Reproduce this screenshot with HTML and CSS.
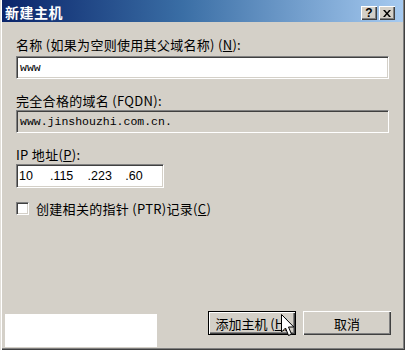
FILE: index.html
```html
<!DOCTYPE html>
<html>
<head>
<meta charset="utf-8">
<link rel="stylesheet" href="styles.css">
</head>
<body>
<div class="window">
  <div class="titlebar">
    <span class="title">新建主机</span>
    <div class="tbtns">
      <div class="tbtn help">?</div>
      <div class="tbtn close">
        <svg width="8" height="7" viewBox="0 0 8 7"><path d="M0 0h2l2 2.5L6 0h2L5 3.5 8 7H6L4 4.5 2 7H0l3-3.5z" fill="#000"/></svg>
      </div>
    </div>
  </div>
  <div class="content">
    <div class="label lbl1">名称 (如果为空则使用其父域名称) (<u>N</u>):</div>
    <div class="field">www</div>
    <div class="label lbl2">完全合格的域名 (FQDN):</div>
    <div class="field disabled">www.jinshouzhi.com.cn.</div>
    <div class="label lbl2">IP 地址(<u>P</u>):</div>
    <div class="field ip">
      <span class="oct o1">10</span><span class="oct">.115</span><span class="oct">.223</span><span class="oct">.60</span>
    </div>
    <div class="check-row">
      <div class="checkbox"></div>
      <span class="label">创建相关的指针 (PTR)记录(<u>C</u>)</span>
    </div>
  </div>
  <div class="footer">
    <div class="blank"></div>
    <div class="buttons">
      <div class="btn default"><span>添加主机 (<u>H</u>)</span></div>
      <div class="btn">取消</div>
    </div>
  </div>
  <svg class="cursor" width="14" height="23" viewBox="0 0 14 23">
    <path d="M0.5 0.5 L0.5 18 L4.5 14 L7.5 21.5 L10.5 20.2 L7.5 13 L12.8 13 Z" fill="#fff" stroke="#000" stroke-width="1" stroke-linejoin="miter"/>
  </svg>
</div>
</body>
</html>
```

FILE: styles.css
```css
html, body {
  margin: 0;
  padding: 0;
  background: #d4d0c8;
}
.window {
  position: relative;
  width: 405px;
  height: 350px;
  box-sizing: border-box;
  padding: 0 2px 2px 2px;
  background: #d4d0c8;
  box-shadow: inset 1px 0 #e2dfd9, inset 2px 0 #ffffff, inset -1px -1px #404040, inset -2px -2px #808080;
  display: flex;
  flex-direction: column;
  font-family: "Noto Sans CJK SC", "Liberation Sans", sans-serif;
  font-size: 13px;
  color: #000;
}
.titlebar {
  height: 22px;
  flex: none;
  display: flex;
  align-items: center;
  justify-content: space-between;
  padding: 0 8px 0 3px;
  background: linear-gradient(to right, #0a246a 0%, #3a6ea5 45%, #a6caf0 100%);
}
.title {
  color: #fff;
  font-weight: bold;
  font-size: 14px;
  line-height: 16px;
  letter-spacing: 0.5px;
  margin-top: 1px;
}
.tbtns {
  display: flex;
  gap: 2px;
  margin-top: 4px;
}
.tbtn {
  width: 16px;
  height: 14px;
  box-sizing: border-box;
  background: #d4d0c8;
  box-shadow: inset 1px 1px #fff, inset -1px -1px #404040, inset -2px -2px #808080;
  display: flex;
  align-items: center;
  justify-content: center;
  font-family: "Liberation Sans", sans-serif;
  font-weight: bold;
  font-size: 12px;
  line-height: 12px;
}
.content {
  padding: 0 14px;
  display: flex;
  flex-direction: column;
}
.label {
  line-height: 15px;
  height: 15px;
  white-space: nowrap;
  letter-spacing: 0.3px;
}
.lbl1 { margin-top: 15px; }
.lbl2 { margin-top: 14px; }
.field {
  margin-top: 3px;
  height: 23px;
  box-sizing: border-box;
  background: #fff;
  border: 1px solid;
  border-color: #808080 #fff #fff #808080;
  box-shadow: inset 1px 1px #404040, inset -1px -1px #d4d0c8;
  padding: 0 0 0 3px;
  display: flex;
  align-items: center;
  font-family: "Liberation Mono", monospace;
  font-size: 11.5px;
}
.lbl1 + .field { margin-top: 4px; }
.field.disabled {
  background: #d4d0c8;
  margin-top: 2px;
}
.field.ip {
  width: 148px;
  height: 24px;
  margin-top: 2px;
  font-family: "Liberation Sans", sans-serif;
  font-size: 12.5px;
  padding-left: 2px;
}
.oct { width: 39px; }
.oct.o1 { width: 32px; }
.check-row {
  margin-top: 13px;
  display: flex;
  align-items: center;
  gap: 7px;
}
.checkbox {
  width: 13px;
  height: 13px;
  box-sizing: border-box;
  background: #fff;
  border: 1px solid;
  border-color: #808080 #fff #fff #808080;
  box-shadow: inset 1px 1px #404040, inset -1px -1px #d4d0c8;
}
.footer {
  margin-top: auto;
  height: 37px;
  display: flex;
  justify-content: space-between;
  align-items: flex-start;
  padding: 0 12px 0 3px;
}
.blank {
  width: 152px;
  height: 33px;
  margin-top: 3px;
  background: #fff;
}
.buttons {
  display: flex;
  gap: 7px;
}
.btn {
  width: 88px;
  height: 24px;
  box-sizing: border-box;
  background: #d4d0c8;
  box-shadow: inset 1px 1px #fff, inset -1px -1px #404040, inset -2px -2px #808080;
  display: flex;
  align-items: center;
  justify-content: center;
  line-height: 15px;
}
.btn.default {
  border: 1px solid #000;
}
.cursor {
  position: absolute;
  left: 281px;
  top: 314px;
}
```
